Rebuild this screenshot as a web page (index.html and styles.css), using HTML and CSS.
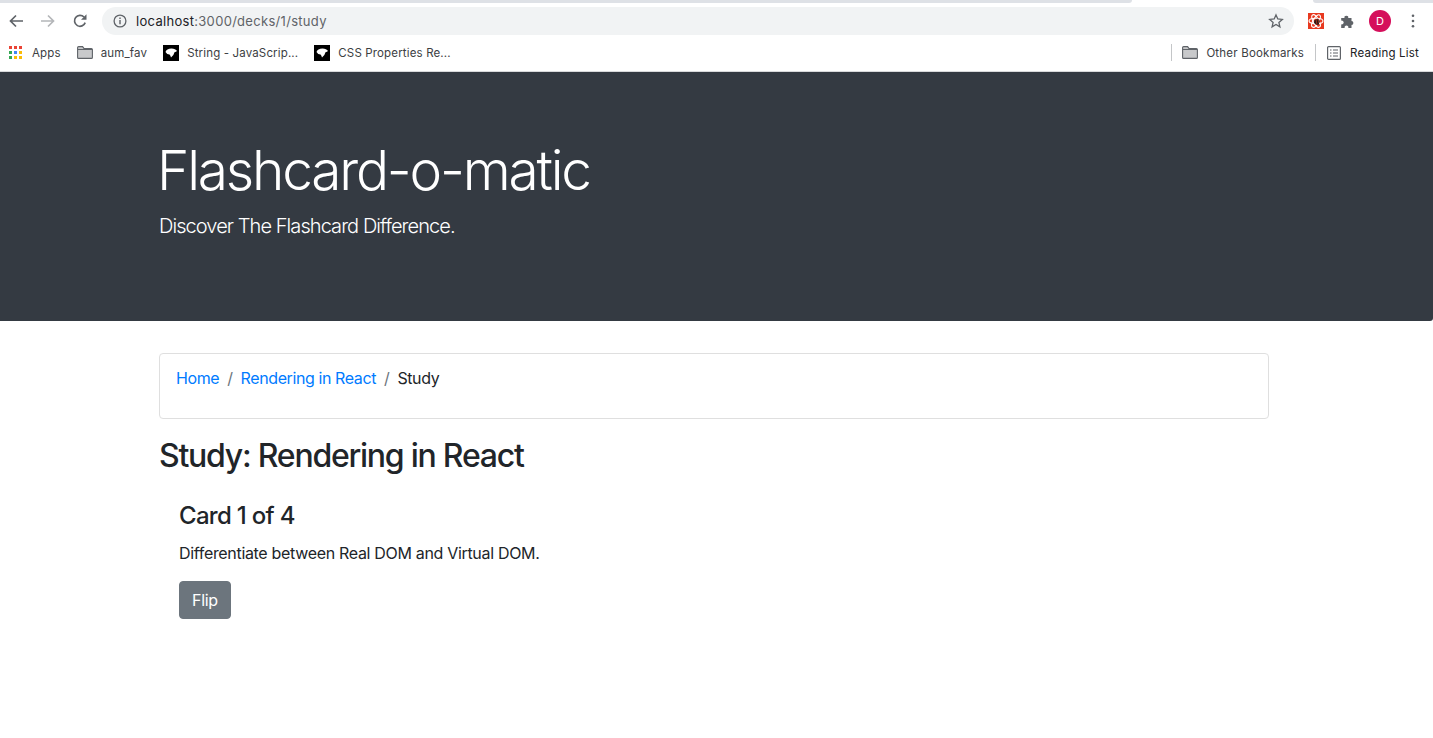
FILE: index.html
```html
<!DOCTYPE html>
<html lang="en">
<head>
<meta charset="utf-8">
<title>Flashcard-o-matic</title>
<link rel="stylesheet" href="styles.css">
</head>
<body>
<div class="chrome">
  <div class="tabstrip"><div class="tab-edge"></div><div class="tab-edge-right"></div></div>
  <div class="toolbar">
    <svg class="nav-icon" viewBox="0 0 16 16"><path d="M15 8H2.500M8 2.500 2.500 8 8 13.500" fill="none" stroke="#5f6368" stroke-width="1.700"/></svg>
    <svg class="nav-icon" viewBox="0 0 16 16"><path d="M1 8h12.500M8 2.500 13.500 8 8 13.500" fill="none" stroke="#b4b6b9" stroke-width="1.700"/></svg>
    <svg class="nav-icon" viewBox="0 0 16 16"><path d="M13.200 9.600A5.500 5.500 0 1 1 12 4" fill="none" stroke="#5f6368" stroke-width="1.700"/><path d="M14.500 1.200v5.600H9z" fill="#5f6368"/></svg>
    <div class="omnibox">
      <svg class="info" viewBox="0 0 14 14"><circle cx="7" cy="7" r="5.900" fill="none" stroke="#5f6368" stroke-width="1.300"/><path d="M6.300 6h1.400v4.200H6.300zM6.300 3.600h1.400V5H6.300z" fill="#5f6368"/></svg>
      <span class="url"><span class="host">localhost</span>:3000/decks/1/study</span>
      <svg class="star" viewBox="0 0 16 16"><path d="M8 1.900 9.800 6l4.500.4-3.400 3 1 4.400L8 11.500l-3.900 2.300 1-4.400-3.400-3L6.200 6z" fill="none" stroke="#5f6368" stroke-width="1.300"/></svg>
    </div>
    <div class="actions">
      <svg class="ext-react" viewBox="0 0 16 16"><rect width="16" height="16" fill="#e8391f"/><g fill="none" stroke="#fff" stroke-width="1.100"><ellipse cx="8" cy="8" rx="7" ry="2.800"/><ellipse cx="8" cy="8" rx="7" ry="2.800" transform="rotate(60 8 8)"/><ellipse cx="8" cy="8" rx="7" ry="2.800" transform="rotate(120 8 8)"/></g><path d="M6.500 7 10 5.500l2 2.500-1.500 4h-2L6 10z" fill="#2b1a16"/><path d="M8 6l1 6M10 6l1 4" stroke="#e8391f" stroke-width=".6"/></svg>
      <svg class="puzzle" viewBox="0 0 16 16"><path d="M1.200 5h3.300a1.900 1.900 0 1 1 3.700 0h3.300v3.100a1.900 1.900 0 1 1 0 3.800v3.100H8.300a1.900 1.900 0 1 0-3.600 0H1.200v-3.700a1.900 1.900 0 1 0 0-3.600z" fill="#5f6368"/></svg>
      <div class="avatar">D</div>
      <svg class="kebab" viewBox="0 0 4 14"><circle cx="2" cy="1.700" r="1.300"/><circle cx="2" cy="7" r="1.300"/><circle cx="2" cy="12.300" r="1.300"/></svg>
    </div>
  </div>
  <div class="bookmarks">
    <div class="bm bm-apps">
      <svg class="bm-icon-grid" viewBox="0 0 13 13"><rect x="0" y="0" width="3" height="3" fill="#ea4335"/><rect x="5" y="0" width="3" height="3" fill="#ea4335"/><rect x="10" y="0" width="3" height="3" fill="#ea4335"/><rect x="0" y="5" width="3" height="3" fill="#34a853"/><rect x="5" y="5" width="3" height="3" fill="#4285f4"/><rect x="10" y="5" width="3" height="3" fill="#fbbc05"/><rect x="0" y="10" width="3" height="3" fill="#34a853"/><rect x="5" y="10" width="3" height="3" fill="#fbbc05"/><rect x="10" y="10" width="3" height="3" fill="#fbbc05"/></svg>
      <span>Apps</span>
    </div>
    <div class="bm bm-fav">
      <svg class="folder" viewBox="0 0 16 13"><path d="M.6 11.400V1.600q0-1 1-1h4l1.500 2h7.300q1 0 1 1v7.800q0 1-1 1H1.600q-1 0-1-1z" fill="#c8c9cb" stroke="#5f6368" stroke-width="1.100"/><path d="M1 3.500h14" stroke="#5f6368" stroke-width="1"/></svg>
      <span>aum_fav</span>
    </div>
    <div class="bm bm-string">
      <svg class="mdn" viewBox="0 0 16 16"><rect width="16" height="16" fill="#000"/><path d="M2.500 7Q3.500 3.500 8.500 3.500q4 0 5.500 2.500-1 1-2.500 1.200Q11 10 8 12.500 7.500 10.500 6.500 9.500 4 9.500 2.500 7z" fill="#fff"/></svg>
      <span>String - JavaScrip...</span>
    </div>
    <div class="bm">
      <svg class="mdn" viewBox="0 0 16 16"><rect width="16" height="16" fill="#000"/><path d="M2.500 7Q3.500 3.500 8.500 3.500q4 0 5.500 2.500-1 1-2.500 1.200Q11 10 8 12.500 7.500 10.500 6.500 9.500 4 9.500 2.500 7z" fill="#fff"/></svg>
      <span>CSS Properties Re...</span>
    </div>
    <div class="bm-right">
      <div class="bm-sep bm-sep-first"></div>
      <div class="bm">
        <svg class="folder" viewBox="0 0 16 13"><path d="M.6 11.400V1.600q0-1 1-1h4l1.500 2h7.300q1 0 1 1v7.800q0 1-1 1H1.600q-1 0-1-1z" fill="#c8c9cb" stroke="#5f6368" stroke-width="1.100"/><path d="M1 3.500h14" stroke="#5f6368" stroke-width="1"/></svg>
        <span>Other Bookmarks</span>
      </div>
      <div class="bm-sep"></div>
      <div class="bm">
        <svg class="list" viewBox="0 0 14 14"><rect x=".6" y=".6" width="12.800" height="12.800" rx="1" fill="none" stroke="#5f6368" stroke-width="1.200"/><path d="M3 4h1.500M6 4h5M3 7h1.500M6 7h5M3 10h1.500M6 10h5" stroke="#5f6368" stroke-width="1.200"/></svg>
        <span class="reading">Reading List</span>
      </div>
    </div>
  </div>
</div>
<header class="jumbotron">
  <div class="container">
    <h1 class="display">Flashcard-o-matic</h1>
    <p class="lead">Discover The Flashcard Difference.</p>
  </div>
</header>
<main class="container">
  <nav class="breadcrumb">
    <a href="#">Home</a><span class="slash">/</span><a href="#">Rendering in React</a><span class="slash">/</span><span class="current">Study</span>
  </nav>
  <h2 class="title">Study: Rendering in React</h2>
  <section class="card">
    <h4 class="card-title">Card 1 of 4</h4>
    <p class="card-text">Differentiate between Real DOM and Virtual DOM.</p>
    <button class="btn">Flip</button>
  </section>
</main>
</body>
</html>
```
FILE: styles.css
```css
* { box-sizing: border-box; }
html, body { margin: 0; padding: 0; background: #fff; overflow: hidden; }
body { font-family: Inter, "Noto Sans", sans-serif; color: #212529; width: 1433px; height: 738px; }

.chrome { height: 72px; background: #fff; border-bottom: 1px solid #d8d9db; }
.tabstrip { height: 3px; background: #fff; display: flex; justify-content: space-between; }
.tab-edge { width: 1132px; height: 3px; background: #dee1e6; border-radius: 0 0 5px 0; }
.tab-edge-right { width: 120px; height: 3px; background: #dee1e6; border-radius: 0 0 0 5px; }
.toolbar { height: 32px; display: flex; align-items: center; padding-left: 8px; margin-top: 2px; }
.nav-icon { width: 16px; height: 16px; margin-right: 16px; flex: none; }
.omnibox { width: 1192px; height: 28px; margin-left: -2px; background: #f1f3f4; border-radius: 14px; display: flex; align-items: center; padding-left: 11px; padding-right: 10px; }
.info { width: 14px; height: 14px; flex: none; }
.url { font-size: 13px; color: #5f6368; margin-left: 9px; flex: 1; letter-spacing: 0.3px; }
.host { color: #202124; }
.star { width: 16px; height: 16px; flex: none; }
.actions { display: flex; align-items: center; margin-left: 14px; }
.ext-react { width: 16px; height: 16px; }
.puzzle { width: 16px; height: 16px; margin-left: 16px; }
.avatar { width: 22px; height: 22px; border-radius: 50%; background: #d50f5b; color: #fff; font-size: 11px; display: flex; align-items: center; justify-content: center; margin-left: 13px; }
.kebab { width: 4px; height: 14px; margin-left: 20px; fill: #5f6368; }

.bookmarks { height: 31px; display: flex; align-items: center; padding-left: 9px; font-size: 11.500px; letter-spacing: 0.150px; color: #3c4043; }
.bm { display: flex; align-items: center; }
.bm-apps { margin-right: 16px; }
.bm-fav { margin-right: 16px; }
.bm-string { margin-right: 16px; }
.bm-icon-grid { width: 13px; height: 13px; margin-right: 10px; }
.folder { width: 16px; height: 13px; margin-right: 8px; }
.mdn { width: 16px; height: 16px; margin-right: 8px; }
.list { width: 14px; height: 14px; margin-right: 9px; }
.reading { color: #202124; letter-spacing: 0.200px; }
.bm-right { margin-left: auto; display: flex; align-items: center; padding-right: 14px; letter-spacing: 0.200px; }
.bm-sep { width: 1px; height: 17px; background: #c4c6c8; margin: 0 11px; }
.bm-sep-first { margin-right: 10px; }

.jumbotron { height: 249px; background: #343a42; color: #fff; border-radius: 0 0 3px 0; padding-top: 65px; }
.container { width: 1140px; margin-left: 144px; padding: 0 15px; }
.display { font-size: 55px; font-weight: 300; line-height: 67px; letter-spacing: -2.200px; margin: 0 0 7px -2px; }
.lead { font-size: 20px; font-weight: 300; line-height: 30px; letter-spacing: -0.930px; margin: 0; }

main.container { padding-top: 32px; }
.breadcrumb { height: 66px; border: 1px solid #dfdfdf; border-radius: 4px; padding: 12px 16px; font-size: 16px; line-height: 24px; letter-spacing: -0.400px; display: flex; align-items: flex-start; margin-bottom: 18px; }
.breadcrumb a { color: #007bff; text-decoration: none; }
.slash { color: #6c757d; padding: 0 8px; }
.current { color: #212529; }
.title { font-size: 32px; font-weight: 500; line-height: 38px; letter-spacing: -1.240px; margin: 0 0 6px; }
.card { padding: 20px; }
.card-title { font-size: 24px; font-weight: 500; line-height: 29px; letter-spacing: -0.700px; margin: 0 0 11px; }
.card-text { font-size: 16px; line-height: 24px; letter-spacing: -0.320px; margin: 0 0 16px; }
.btn { display: block; background: #6c757d; color: #fff; border: 1px solid #6c757d; border-radius: 4px; font: 400 16px/24px Inter, "Noto Sans", sans-serif; letter-spacing: -0.300px; padding: 6px 12px; }
```
